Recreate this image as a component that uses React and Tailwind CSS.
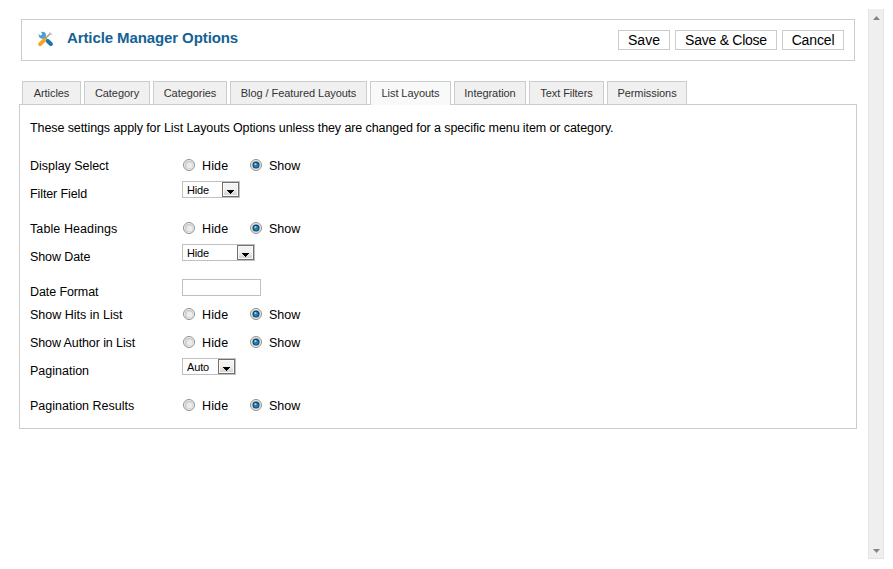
const tabs = [
  { label: 'Articles', w: 'w-[59px]' },
  { label: 'Category', w: 'w-[66px]' },
  { label: 'Categories', w: 'w-[74px]' },
  { label: 'Blog / Featured Layouts', w: 'w-[137px]' },
  { label: 'List Layouts', w: 'w-[81px]', active: true },
  { label: 'Integration', w: 'w-[72px]' },
  { label: 'Text Filters', w: 'w-[75px]' },
  { label: 'Permissions', w: 'w-[80px]' },
];

const rows = [
  { label: 'Display Select', type: 'radio', h: 'h-7', track: 'tracking-[-0.03px]' },
  { label: 'Filter Field', type: 'select', value: 'Hide', w: 'w-[58px]', h: 'h-[35px]' },
  { label: 'Table Headings', type: 'radio', h: 'h-7', track: 'tracking-[0.09px]' },
  { label: 'Show Date', type: 'select', value: 'Hide', w: 'w-[73px]', h: 'h-[35px]' },
  { label: 'Date Format', type: 'text', h: 'h-[23px]' },
  { label: 'Show Hits in List', type: 'radio', h: 'h-7', track: 'tracking-normal' },
  { label: 'Show Author in List', type: 'radio', h: 'h-7' },
  { label: 'Pagination', type: 'select', value: 'Auto', w: 'w-[54px]', h: 'h-[35px]', track: 'tracking-normal' },
  { label: 'Pagination Results', type: 'radio', h: 'h-7', track: 'tracking-normal' },
];

function ToolsIcon() {
  return (
    <svg className="mt-[11px] ml-[15px] shrink-0" width="17" height="16" viewBox="0 0 17 16">
      <path d="M13.6 2.2 8.5 7.3" stroke="#a9acab" strokeWidth="1.8" />
      <path d="M12.4 1.6 14.9 3.6" stroke="#c4c5c4" strokeWidth="1.4" />
      <path d="M5.5 5.3 13.2 12.5" stroke="#3e8cba" strokeWidth="3" strokeLinecap="round" />
      <path d="M1.3 3.1 3.7 4.6 5.2 3.2 3.9.7 7.3.9 9 3 8.8 6.4 6.3 8 2.7 6.9Z" fill="#4f9fd2" />
      <path d="M3.1 13.1 7.8 8.6" stroke="#f6a423" strokeWidth="4" strokeLinecap="round" />
      <path d="m11 10.2 2.9 2.8" stroke="#1a76a8" strokeWidth="4" strokeLinecap="round" />
    </svg>
  );
}

function Radio({ on }) {
  return (
    <svg className="shrink-0" width="12" height="12" viewBox="0 0 12 12">
      <circle cx="6" cy="6" r="5.5" fill="#f6f6f6" stroke="#8e8f8f" />
      {on ? (
        <>
          <circle cx="6" cy="6" r="4.1" fill="#dfe7eb" stroke="#b0bcc4" strokeWidth=".5" />
          <circle cx="6" cy="6" r="3.5" fill="#143c58" />
          <circle cx="6" cy="6.2" r="2.5" fill="#1f7eb0" />
          <circle cx="5.4" cy="5.2" r="1.1" fill="#8fd0ea" />
        </>
      ) : (
        <>
          <circle cx="6" cy="6" r="3.9" fill="#d6d9dc" stroke="#b9bdc1" strokeWidth=".6" />
          <circle cx="6.7" cy="6.7" r="2.9" fill="#ececee" />
        </>
      )}
    </svg>
  );
}

function Control({ row }) {
  if (row.type === 'radio') {
    return (
      <div className="flex h-[25px] pt-[6px] leading-[14px]">
        <div className="flex w-[67px] pl-px"><Radio /><span className="ml-[7px] tracking-[0.15px]">Hide</span></div>
        <div className="flex pl-px"><Radio on /><span className="ml-[7px] tracking-normal">Show</span></div>
      </div>
    );
  }
  if (row.type === 'text') {
    return <div className="h-[17px] w-[79px] border border-[#c0c0c0] bg-white" />;
  }
  return (
    <div className={`flex h-[17px] justify-between border border-[#c0c0c0] bg-white pl-1 text-[11px] leading-[17px] tracking-[-0.15px] ${row.w}`}>
      <span>{row.value}</span>
      <span className="flex h-[15px] w-[17px] items-end justify-center border border-[#707070] bg-linear-to-b from-[#f2f2f2] from-45% to-[#cfcfcf] pb-[2px] shadow-[inset_0_0_0_1px_#fafafa]">
        <svg width="7" height="4" viewBox="0 0 7 4" shapeRendering="crispEdges"><path d="M0 0h7v1H6v1H5v1H4v1H3V3H2V2H1V1H0Z" fill="#000" /></svg>
      </span>
    </div>
  );
}

export default function App() {
  return (
    <div className="flex h-[569px] w-[893px] overflow-hidden bg-white font-['Liberation_Sans',Arial,sans-serif] text-[12.5px] text-black">
      <main className="ml-[19px] w-[838px] shrink-0 pt-[19px]">
        <header className="mr-[2px] ml-[2px] flex h-[42px] border border-[#ccc]">
          <ToolsIcon />
          <h1 className="mt-[9px] ml-[13px] text-[15px] leading-[18px] font-bold tracking-[-0.1px] whitespace-nowrap text-[#146295]">Article Manager Options</h1>
          <div className="mt-[10px] mr-[10px] ml-auto flex gap-[5px] text-center text-[14px] leading-[19px]">
            <div className="h-5 w-[52px] border border-[#ccc]">Save</div>
            <div className="h-5 w-[102px] border border-[#ccc] tracking-[-0.25px] whitespace-nowrap">Save &amp; Close</div>
            <div className="h-5 w-[62px] border border-[#ccc] tracking-[-0.15px]">Cancel</div>
          </div>
        </header>
        <nav className="mt-5 ml-[3px] flex h-[23px] gap-[3px]">
          {tabs.map((t) => (
            <div
              key={t.label}
              className={`${t.w} ${t.active ? 'z-10 h-6 bg-[#f9f9f9]' : 'h-[23px] bg-[#f0f0f0]'} border border-b-0 border-[#ccc] text-center text-[11px] leading-[23px] tracking-[-0.06px] whitespace-nowrap text-[#333]`}
            >
              {t.label}
            </div>
          ))}
        </nav>
        <section className="h-[325px] border border-[#ccc] px-[10px] pt-[15px]">
          <p className="h-[33px] leading-[16px] tracking-[-0.09px] whitespace-nowrap">These settings apply for List Layouts Options unless they are changed for a specific menu item or category.</p>
          {rows.map((row) => (
            <div key={row.label} className={`flex items-start ${row.h}`}>
              <div className={`w-[152px] pt-1 leading-[18px] whitespace-nowrap ${row.track ?? 'tracking-[-0.1px]'}`}>{row.label}</div>
              <Control row={row} />
            </div>
          ))}
        </section>
      </main>
      <aside className="mt-[9px] ml-[11px] flex h-[550px] w-4 shrink-0 flex-col items-center justify-between border-x border-b border-[#e4e4e4] bg-[#efefef] pt-[7px] pb-[5px]">
        <svg width="7" height="4" viewBox="0 0 7 4"><path d="M0 4 3.5 0 7 4Z" fill="#858585" /></svg>
        <svg width="7" height="4" viewBox="0 0 7 4"><path d="M0 0h7L3.5 4Z" fill="#858585" /></svg>
      </aside>
    </div>
  );
}
